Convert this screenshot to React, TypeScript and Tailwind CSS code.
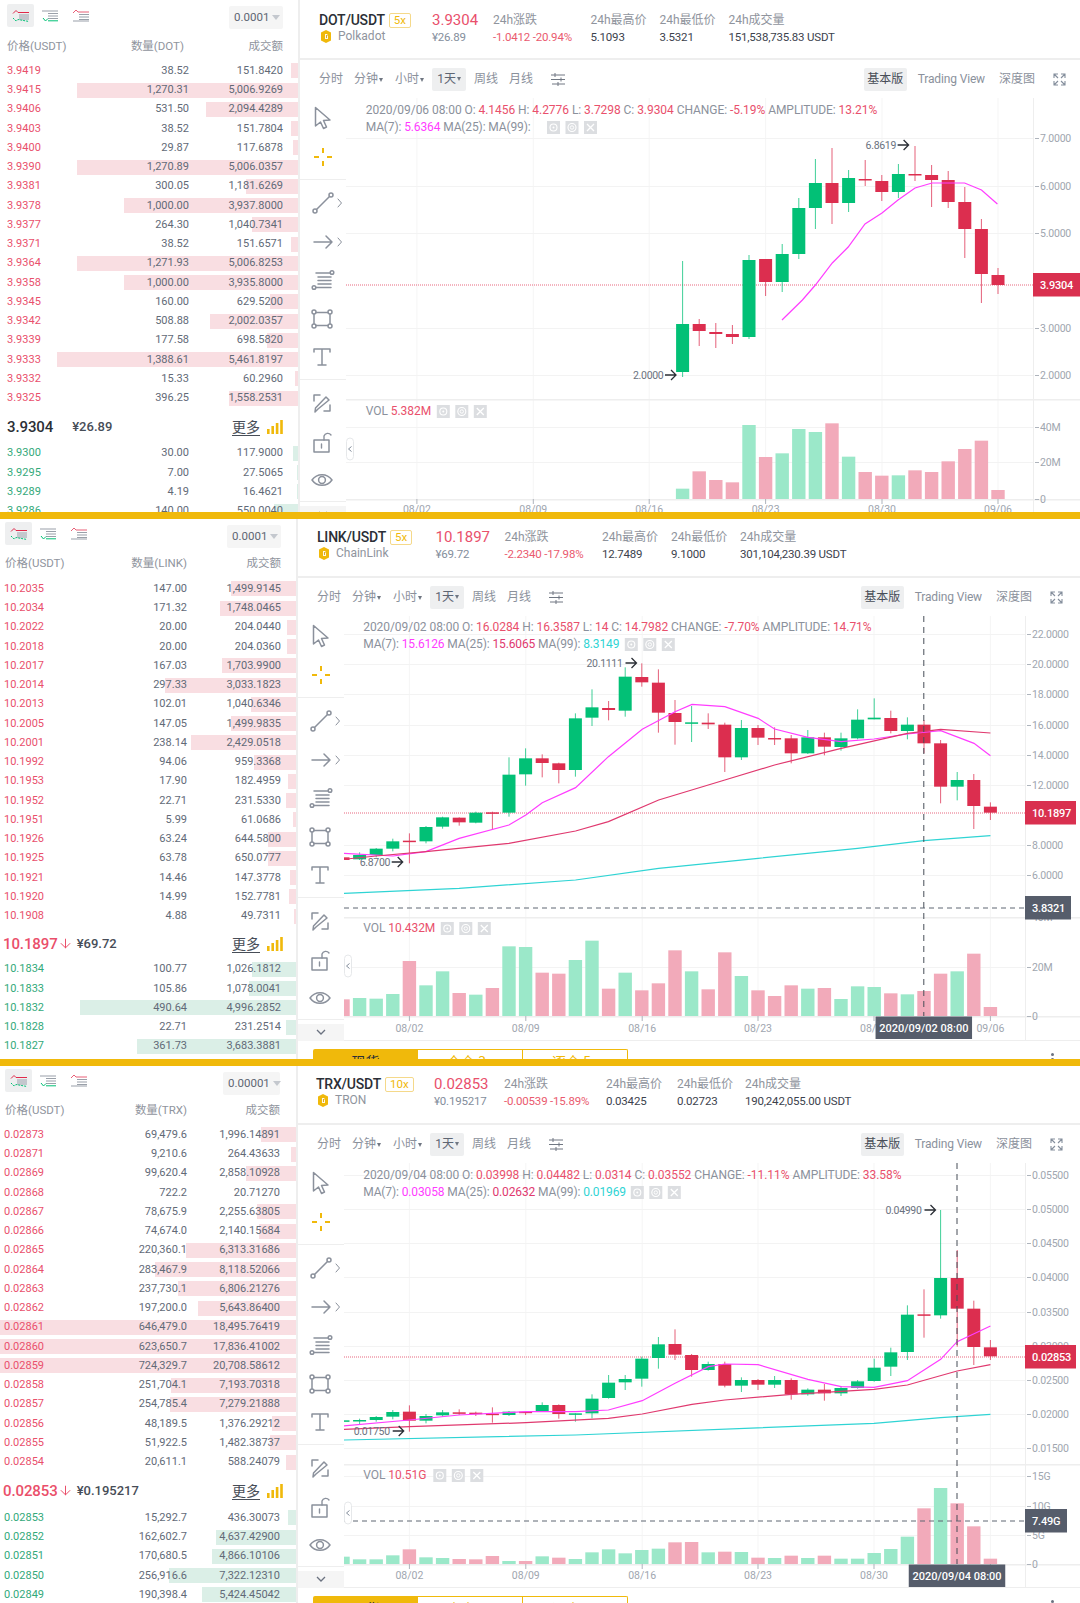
import React from 'react';
import { ArrowDown } from 'lucide-react';

const RED = '#dc2e4f';
const GREEN = '#02c076';
const TXT = '#e9506c';
const K = 2.0103;

type Row = [string, string, string];
type Part = [string, string?];
// [isRed, bodyTop, bodyBottom, wickTop, wickBottom]
type Candle = [number, number, number, number, number];
type Vol = [number, number];

const dotAsks: Row[] = [
  ['3.9419', '38.52', '151.8420'], ['3.9415', '1,270.31', '5,006.9269'], ['3.9406', '531.50', '2,094.4289'],
  ['3.9403', '38.52', '151.7804'], ['3.9400', '29.87', '117.6878'], ['3.9390', '1,270.89', '5,006.0357'],
  ['3.9381', '300.05', '1,181.6269'], ['3.9378', '1,000.00', '3,937.8000'], ['3.9377', '264.30', '1,040.7341'],
  ['3.9371', '38.52', '151.6571'], ['3.9364', '1,271.93', '5,006.8253'], ['3.9358', '1,000.00', '3,935.8000'],
  ['3.9345', '160.00', '629.5200'], ['3.9342', '508.88', '2,002.0357'], ['3.9339', '177.58', '698.5820'],
  ['3.9333', '1,388.61', '5,461.8197'], ['3.9332', '15.33', '60.2960'], ['3.9325', '396.25', '1,558.2531'],
];
const dotBids: Row[] = [
  ['3.9300', '30.00', '117.9000'], ['3.9295', '7.00', '27.5065'], ['3.9289', '4.19', '16.4621'], ['3.9286', '140.00', '550.0040'],
];
const linkAsks: Row[] = [
  ['10.2035', '147.00', '1,499.9145'], ['10.2034', '171.32', '1,748.0465'], ['10.2022', '20.00', '204.0440'],
  ['10.2018', '20.00', '204.0360'], ['10.2017', '167.03', '1,703.9900'], ['10.2014', '297.33', '3,033.1823'],
  ['10.2013', '102.01', '1,040.6346'], ['10.2005', '147.05', '1,499.9835'], ['10.2001', '238.14', '2,429.0518'],
  ['10.1992', '94.06', '959.3368'], ['10.1953', '17.90', '182.4959'], ['10.1952', '22.71', '231.5330'],
  ['10.1951', '5.99', '61.0686'], ['10.1926', '63.24', '644.5800'], ['10.1925', '63.78', '650.0777'],
  ['10.1921', '14.46', '147.3778'], ['10.1920', '14.99', '152.7781'], ['10.1908', '4.88', '49.7311'],
];
const linkBids: Row[] = [
  ['10.1834', '100.77', '1,026.1812'], ['10.1833', '105.86', '1,078.0041'], ['10.1832', '490.64', '4,996.2852'],
  ['10.1828', '22.71', '231.2514'], ['10.1827', '361.73', '3,683.3881'],
];
const trxAsks: Row[] = [
  ['0.02873', '69,479.6', '1,996.14891'], ['0.02871', '9,210.6', '264.43633'], ['0.02869', '99,620.4', '2,858.10928'],
  ['0.02868', '722.2', '20.71270'], ['0.02867', '78,675.9', '2,255.63805'], ['0.02866', '74,674.0', '2,140.15684'],
  ['0.02865', '220,360.1', '6,313.31686'], ['0.02864', '283,467.9', '8,118.52066'], ['0.02863', '237,730.1', '6,806.21276'],
  ['0.02862', '197,200.0', '5,643.86400'], ['0.02861', '646,479.0', '18,495.76419'], ['0.02860', '623,650.7', '17,836.41002'],
  ['0.02859', '724,329.7', '20,708.58612'], ['0.02858', '251,704.1', '7,193.70318'], ['0.02857', '254,785.4', '7,279.21888'],
  ['0.02856', '48,189.5', '1,376.29212'], ['0.02855', '51,922.5', '1,482.38737'], ['0.02854', '20,611.1', '588.24079'],
];
const trxBids: Row[] = [
  ['0.02853', '15,292.7', '436.30073'], ['0.02852', '162,602.7', '4,637.42900'], ['0.02851', '170,680.5', '4,866.10106'],
  ['0.02850', '256,916.6', '7,322.12310'], ['0.02849', '190,398.4', '5,424.45042'],
];

const dotCandles: Candle[] = [
  [1, 275, 285, 268, 294], [1, 229, 274, 219, 303], [1, 202, 229, 187, 258], [1, 180, 202, 171, 208], [1, 175, 180, 165, 207],
  [1, 174, 175.5, 146, 181], [0, 174, 192, 164, 198], [1, 181, 192, 175, 201], [1, 179, 180.5, 160, 186], [0, 178, 203, 170, 212],
  [1, 183, 203, 148, 224], [0, 183, 208, 159, 229], [0, 208, 254, 198, 259], [0, 254, 282, 244, 292], [1, 259, 282, 259, 296],
  [0, 260, 337, 255, 339], [1, 334, 337, 325, 344], [1, 332, 334, 323, 348], [1, 324, 331, 319, 346], [0, 324, 372, 261, 377],
];
const linkCandles: Candle[] = [
  [1, 560, 578, 547, 600], [1, 480, 558, 462, 627], [0, 480, 500, 456, 541], [1, 370, 500, 360, 550], [1, 314, 370, 300, 400],
  [0, 314, 333, 292, 358], [1, 294, 333, 272, 340], [0, 293, 298, 235, 298], [0, 299, 355, 268, 358], [0, 355, 381, 338, 392],
  [1, 352, 380, 338, 406], [0, 352, 400, 330, 402], [1, 355, 400, 345, 430], [1, 354, 356, 322, 375], [1, 324, 353, 315, 375],
  [0, 324, 412, 300, 420], [1, 314, 412, 308, 456], [1, 308, 313, 280, 327], [0, 307, 310, 258, 366], [1, 279, 306, 240, 374],
  [1, 188, 278, 148, 338], [1, 171, 187, 130, 200], [0, 170, 272, 142, 290], [1, 264, 270, 243, 301], [0, 262, 293, 208, 318],
  [0, 295, 450, 280, 470], [1, 430, 450, 428, 490], [1, 415, 429, 403, 472], [0, 415, 463, 385, 497], [0, 464, 578, 412, 590],
  [1, 577, 580, 575, 630], [0, 578, 608, 575, 610], [1, 593, 607, 592, 617], [0, 592, 620, 590, 626], [0, 621, 664, 618, 670],
  [1, 662, 665, 640, 730], [0, 664, 686, 656, 694], [0, 686, 705, 684, 712], [0, 705, 718, 697, 720], [1, 712, 720, 710, 722],
];
const trxCandles: Candle[] = [
  [1, 562, 589, 540, 600], [1, 446, 561, 422, 615], [1, 354, 446, 270, 560], [0, 354, 466, 150, 476], [1, 463, 467, 388, 533],
  [0, 464, 576, 436, 600], [0, 577, 620, 563, 648], [0, 623, 663, 596, 665], [0, 664, 684, 660, 686], [0, 684, 700, 678, 708],
  [1, 689, 700, 672, 722], [0, 689, 703, 685, 707], [1, 660, 703, 655, 719], [0, 660, 674, 648, 684], [1, 660, 674, 657, 690],
  [0, 660, 677, 652, 696], [1, 612, 677, 605, 682], [0, 612, 630, 605, 632], [1, 585, 630, 582, 650], [1, 552, 584, 508, 600],
  [0, 553, 594, 531, 626], [0, 596, 656, 590, 680], [0, 657, 667, 645, 690], [0, 668, 714, 645, 716], [0, 716, 760, 703, 775],
  [0, 760, 764, 760, 785], [1, 735, 762, 733, 776], [0, 735, 753, 727, 756], [1, 755, 758, 753, 765], [0, 755, 765, 753, 768],
  [1, 761, 764, 742, 788], [1, 758, 761, 755, 768], [1, 757, 759, 748, 765], [0, 757, 766, 750, 770], [0, 768, 782, 762, 790],
  [1, 755, 782, 736, 815], [0, 756, 770, 750, 778], [0, 771, 780, 768, 785], [0, 780, 783, 776, 795], [0, 781, 783, 781, 783],
];

const dotVol: Vol[] = [[0, 266], [1, 214], [1, 240], [1, 247], [0, 75], [1, 171], [0, 160], [0, 87], [0, 96], [1, 70], [0, 170], [1, 216], [1, 227], [0, 226], [1, 211], [1, 216], [1, 184], [1, 147], [1, 122], [1, 270]];
const linkVol: Vol[] = [[1, 298], [0, 294], [0, 296], [0, 282], [1, 183], [0, 256], [0, 214], [1, 279], [0, 284], [1, 264], [0, 139], [0, 141], [1, 218], [1, 221], [0, 180], [0, 122], [1, 266], [0, 218], [1, 271], [1, 250], [1, 151], [0, 214], [1, 268], [1, 157], [0, 228], [1, 271], [1, 288], [1, 256], [0, 266], [1, 264], [0, 297], [0, 259], [0, 261], [1, 280], [0, 283], [1, 273], [1, 221], [0, 214], [1, 161], [1, 321]];
const trxVol: Vol[] = [[0, 380], [0, 388], [0, 388], [0, 376], [1, 358], [0, 382], [0, 384], [1, 387], [1, 388], [1, 378], [0, 393], [1, 393], [0, 379], [1, 383], [0, 387], [0, 367], [0, 358], [0, 370], [0, 360], [0, 356], [1, 337], [1, 336], [0, 367], [1, 365], [0, 366], [1, 383], [0, 384], [1, 377], [0, 384], [1, 377], [0, 386], [0, 386], [0, 369], [0, 357], [0, 320], [1, 235], [0, 174], [1, 220], [1, 289], [1, 386]];

type Panel = {
  key: string;
  base: string; quote: string; name: string; lev: string; price: string; cny: string; change: string;
  high: string; low: string; vol: string; step: string; asks: Row[]; bids: Row[]; barScale: number;
  arrow: boolean; tabs: boolean;
  cls: {
    panel: string; book: string; top: string; left: string; rowsPad: string; rowPad: string; totalW: string; qtyW: string;
    mid: string; grid: string; head: string; headPad: string; toolPad: string; chartH: string;
    sel: string; btn: string;
  };
  x0: number; y0: number; w: number; h: number;
  axis: number; badgeW: number; crossW: number;
  cLast: number; cy: (v: number) => number; candles: Candle[];
  ma7: number[][]; ma25: number[][]; ma99: number[][];
  vy: (v: number) => number; vols: Vol[]; vBase: number; vTop: number;
  prices: [string, number][]; volLabels: [string, number][]; lastPrice: [string, number];
  ticks: number[]; xLabelY: number; legendX: number; l1Y: number; l2Y: number; volLegendY: number;
  l1: Part[]; l2: Part[]; volText: string; iconsX: number; volIconsX: number;
  hi: [string, number, number]; lo: [string, number, number];
  handleY: number; cross?: { x: number; y: number; yLabel: string; time: string; };
  bottom: number;
};

const G = '#8b919c';
const M = '#ff3dff';
const P = '#e0396f';
const C = '#2fd4d4';

const zx = (v: number) => 300 + v / K;

const panels: Panel[] = [
  {
    key: 'dot', base: 'DOT', quote: 'USDT', name: 'Polkadot', lev: '5x', price: '3.9304', cny: '¥26.89', change: '-1.0412 -20.94%',
    high: '5.1093', low: '3.5321', vol: '151,538,735.83 USDT', step: '0.0001', asks: dotAsks, bids: dotBids, barScale: 0.0441, arrow: false, tabs: false,
    cls: {
      panel: 'h-[512px]', book: 'w-[298px]', top: 'h-[37px] pl-[7px] pr-[15px]', left: 'pl-[7px] pr-[15px]', rowsPad: 'pt-[4.4px]',
      rowPad: 'pl-[7px] pr-[15px]', totalW: 'w-[94px]', qtyW: 'w-[95px]', mid: 'h-[36px] pt-[2px] pl-[7px] pr-[14px]',
      grid: 'grid-cols-[113px_61px_97.5px_69px_69px_1fr]', head: 'h-[60px]', headPad: 'pl-[19px] pt-[11px]', toolPad: 'pl-[19px] pr-[14px]', chartH: 'h-[414px]',
      sel: 'w-[54px] h-[23px] mt-[6px] pl-[5px]', btn: 'mt-[4px]',
    },
    x0: 346, y0: 98, w: 734, h: 414, axis: 1033, badgeW: 47, crossW: 46,
    cLast: 998, cy: (v) => v, candles: dotCandles,
    ma7: [[782, 320], [802.4, 300], [815.4, 285], [832.3, 263], [848.2, 247], [865, 224], [882, 213], [898, 200], [915, 188], [932, 183], [964.6, 183], [981.5, 190], [997.4, 204]],
    ma25: [], ma99: [],
    vy: (v) => 400 + v / 3, vols: dotVol, vBase: 499, vTop: 399,
    prices: [['7.0000', 138], ['6.0000', 186], ['5.0000', 233], ['3.0000', 328], ['2.0000', 375]],
    volLabels: [['40M', 427], ['20M', 462], ['0', 499]],
    lastPrice: ['3.9304', 285],
    ticks: [416.9, 533.3, 649.2, 765.6, 882, 998], xLabelY: 509, legendX: 365.7, l1Y: 110, l2Y: 127,
    volLegendY: 411,
    l1: [['2020/09/06 08:00 O: '], ['4.1456', TXT], [' H: '], ['4.2776', TXT], [' L: '], ['3.7298', TXT], [' C: '], ['3.9304', TXT], [' CHANGE: '], ['-5.19%', TXT], [' AMPLITUDE: '], ['13.21%', TXT]],
    l2: [['MA(7): '], ['5.6364', M], [' MA(25): '], [' MA(99): ']],
    volText: '5.382M', iconsX: 547, volIconsX: 436.8,
    hi: ['6.8619', 865.6, 145], lo: ['2.0000', 633, 375],
    handleY: 438, bottom: 512,
  },
  {
    key: 'link', base: 'LINK', quote: 'USDT', name: 'ChainLink', lev: '5x', price: '10.1897', cny: '¥69.72', change: '-2.2340 -17.98%',
    high: '12.7489', low: '9.1000', vol: '301,104,230.39 USDT', step: '0.0001', asks: linkAsks, bids: linkBids, barScale: 0.0433, arrow: true, tabs: true,
    cls: {
      panel: 'h-[540px]', book: 'w-[296px]', top: 'h-[35px] pl-[5px] pr-[15px]', left: 'pl-[5px] pr-[15px]', rowsPad: 'pt-[5.4px]',
      rowPad: 'pl-[4px] pr-[15px]', totalW: 'w-[94px]', qtyW: 'w-[95px]', mid: 'h-[34px] pt-[2px] pl-[3px] pr-[12px]',
      grid: 'grid-cols-[118.5px_69px_97.4px_69.2px_69px_1fr]', head: 'h-[59px]', headPad: 'pl-[19px] pt-[9px]', toolPad: 'pl-[19px] pr-[17px]', chartH: 'h-[425px]',
      sel: 'w-[54px] h-[23px] mt-[6px] pl-[5px]', btn: 'mt-[3px]',
    },
    x0: 344, y0: 616, w: 736, h: 425, axis: 1025, badgeW: 51, crossW: 46,
    cLast: 990.4, cy: (v) => 620 + v / 3, candles: linkCandles,
    ma7: [[87, 700], [187, 708], [253, 695], [320, 655], [420, 615], [454, 585], [487, 548], [554, 503], [620, 410], [688, 328], [754, 275], [788, 253], [854, 260], [921, 295], [954, 327], [1021, 352], [1088, 365], [1154, 357], [1221, 342], [1288, 332], [1355, 370], [1388, 407]].map(([a, b]) => [zx(a), 620 + b / 3]),
    ma25: [[87, 718], [153, 708], [253, 695], [420, 670], [554, 633], [620, 605], [721, 540], [854, 480], [954, 435], [1088, 385], [1221, 340], [1288, 328], [1388, 339]].map(([a, b]) => [zx(a), 620 + b / 3]),
    ma99: [[87, 820], [320, 805], [554, 780], [721, 745], [921, 715], [1121, 685], [1254, 662], [1388, 647]].map(([a, b]) => [zx(a), 620 + b / 3]),
    vy: (v) => 900 + v / 3, vols: linkVol, vBase: 1016, vTop: 917,
    prices: [['22.0000', 634], ['20.0000', 664], ['18.0000', 694], ['16.0000', 725], ['14.0000', 755], ['12.0000', 785], ['8.0000', 845], ['6.0000', 875]],
    volLabels: [['40M', 917], ['20M', 967], ['0', 1016]],
    lastPrice: ['10.1897', 813],
    ticks: [409.4, 525.8, 642.2, 758, 874, 990.4], xLabelY: 1028, legendX: 363.2, l1Y: 627, l2Y: 644,
    volLegendY: 928,
    l1: [['2020/09/02 08:00 O: '], ['16.0284', TXT], [' H: '], ['16.3587', TXT], [' L: '], ['14', TXT], [' C: '], ['14.7982', TXT], [' CHANGE: '], ['-7.70%', TXT], [' AMPLITUDE: '], ['14.71%', TXT]],
    l2: [['MA(7): '], ['15.6126', M], [' MA(25): '], ['15.6065', P], [' MA(99): '], ['8.3149', C]],
    volText: '10.432M', iconsX: 624.8, volIconsX: 440.8,
    hi: ['20.1111', 586.5, 663], lo: ['6.8700', 359.7, 862],
    handleY: 955, bottom: 1040,
    cross: { x: 923.8, y: 908, yLabel: '3.8321', time: '2020/09/02 08:00' },
  },
  {
    key: 'trx', base: 'TRX', quote: 'USDT', name: 'TRON', lev: '10x', price: '0.02853', cny: '¥0.195217', change: '-0.00539 -15.89%',
    high: '0.03425', low: '0.02723', vol: '190,242,055.00 USDT', step: '0.00001', asks: trxAsks, bids: trxBids, barScale: 0.01735, arrow: true, tabs: true,
    cls: {
      panel: 'h-[537px]', book: 'w-[296px]', top: 'h-[35px] pl-[5px] pr-[16px]', left: 'pl-[5px] pr-[16px]', rowsPad: 'pt-[4.4px]',
      rowPad: 'pl-[4px] pr-[16px]', totalW: 'w-[93px]', qtyW: 'w-[95px]', mid: 'h-[36.5px] pt-[1.7px] pl-[3px] pr-[12px]',
      grid: 'grid-cols-[118px_70px_102px_71px_68px_1fr]', head: 'h-[59px]', headPad: 'pl-[18px] pt-[9px]', toolPad: 'pl-[19px] pr-[17px]', chartH: 'h-[425px]',
      sel: 'w-[57px] h-[23px] mt-[6px] pl-[5px]', btn: 'mt-[3px]',
    },
    x0: 344, y0: 1163, w: 736, h: 425, axis: 1025, badgeW: 51, crossW: 42,
    cLast: 990.4, cy: (v) => 1160 + v / 3, candles: trxCandles,
    ma7: [[87, 798], [220, 780], [320, 765], [454, 755], [554, 755], [620, 750], [688, 722], [754, 670], [821, 620], [854, 612], [921, 614], [1021, 658], [1088, 680], [1154, 682], [1221, 662], [1288, 598], [1321, 545], [1388, 498]].map(([a, b]) => [zx(a), 1160 + b / 3]),
    ma25: [[87, 808], [220, 800], [454, 788], [620, 775], [688, 762], [788, 733], [854, 720], [988, 703], [1154, 688], [1221, 675], [1321, 633], [1388, 614]].map(([a, b]) => [zx(a), 1160 + b / 3]),
    ma99: [[87, 840], [554, 825], [1154, 790], [1288, 773], [1388, 763]].map(([a, b]) => [zx(a), 1160 + b / 3]),
    vy: (v) => 1430 + v / 3, vols: trxVol, vBase: 1564, vTop: 1464,
    prices: [['0.05500', 1175], ['0.05000', 1209], ['0.04500', 1243], ['0.04000', 1277], ['0.03500', 1312], ['0.03000', 1346], ['0.02500', 1380], ['0.02000', 1414], ['0.01500', 1448]],
    volLabels: [['15G', 1476], ['10G', 1506], ['5G', 1535], ['0', 1564]],
    lastPrice: ['0.02853', 1357],
    ticks: [409.4, 525.8, 642.2, 758, 874, 990.4], xLabelY: 1575, legendX: 363.2, l1Y: 1175, l2Y: 1192,
    volLegendY: 1475,
    l1: [['2020/09/04 08:00 O: '], ['0.03998', TXT], [' H: '], ['0.04482', TXT], [' L: '], ['0.0314', TXT], [' C: '], ['0.03552', TXT], [' CHANGE: '], ['-11.11%', TXT], [' AMPLITUDE: '], ['33.58%', TXT]],
    l2: [['MA(7): '], ['0.03058', M], [' MA(25): '], ['0.02632', P], [' MA(99): '], ['0.01969', C]],
    volText: '10.51G', iconsX: 630.8, volIconsX: 433.3,
    hi: ['0.04990', 885.5, 1210], lo: ['0.01750', 353.7, 1431],
    handleY: 1502, bottom: 1587,
    cross: { x: 957, y: 1521, yLabel: '7.49G', time: '2020/09/04 08:00' },
  },
];

function DepthIcon({ mode }: { mode: number }) {
  return (
    <svg width="18" height="14" viewBox="0 0 18 14" fill="none">
      {mode === 0 && <path d="M1 4.5 L4 1.5 L6 3.5 L17 3.5" stroke="#e0294a" strokeWidth="1" />}
      {mode === 2 && <path d="M1 4 L4 1 L6 3 L17 3" stroke="#e0294a" strokeWidth="1" opacity="0.75" />}
      {mode === 0 && (
        <>
          <path d="M7 6 H17 M7 8 H17 M7 10 H17" stroke="#9aa0a9" strokeWidth="1.1" />
          <path d="M1 9 L4 12 L6 10.5 L17 12.5" stroke="#02c076" strokeWidth="1" strokeDasharray="2 1" />
        </>
      )}
      {mode === 1 && (
        <>
          <path d="M1 2 H17 M7 4.5 H17 M7 7 H17 M7 9.5 H17" stroke="#9aa0a9" strokeWidth="1.1" />
          <path d="M2 9 L4.5 12 L7 9.5 M7 11.8 H17" stroke="#02c076" strokeWidth="1" />
        </>
      )}
      {mode === 2 && (
        <path d="M7 5.5 H17 M7 8 H17 M7 10.5 H17 M1 12 H17" stroke="#9aa0a9" strokeWidth="1.1" />
      )}
    </svg>
  );
}

function OrderRow({ r, color, barColor, scale, p }: { r: Row; color: string; barColor: string; scale: number; p: Panel }) {
  const amount = parseFloat(r[2].replace(/,/g, ''));
  return (
    <div className={`relative h-[19.25px] flex items-center text-[11px] ${p.cls.rowPad}`}>
      <div className={`absolute right-0 top-[2px] h-[15px] ${barColor}`} style={{ width: Math.min(amount * scale, 296) }} />
      <span className={`relative flex-1 ${color}`}>{r[0]}</span>
      <span className={`relative text-right text-[#626a77] ${p.cls.qtyW}`}>{r[1]}</span>
      <span className={`relative text-right text-[#626a77] ${p.cls.totalW}`}>{r[2]}</span>
    </div>
  );
}

function OrderBook({ p }: { p: Panel }) {
  return (
    <div className={`shrink-0 overflow-hidden ${p.cls.book}`}>
      <div className={`flex items-start ${p.cls.top}`}>
        <div className={`flex items-center ${p.cls.btn}`}>
          <div className="w-[27px] h-[23px] rounded-[2px] bg-[#eeeff0] flex items-center justify-center"><DepthIcon mode={0} /></div>
          <div className="w-[18px] ml-[7px] flex items-center"><DepthIcon mode={1} /></div>
          <div className="w-[18px] ml-[13px] flex items-center"><DepthIcon mode={2} /></div>
        </div>
        <div className={`ml-auto rounded-[2px] bg-[#f5f5f5] flex items-center text-[11.5px] text-[#5e6673] ${p.cls.sel}`}>
          {p.step}
          <span className="ml-[3px] w-0 h-0 border-x-[4px] border-x-transparent border-t-[5px] border-t-[#c4c8ce]" />
        </div>
      </div>
      <div className={`h-[20px] flex items-center text-[11.5px] text-[#8f949d] ${p.cls.left}`}>
        <span className="flex-1">价格({p.quote})</span>
        <span className={`text-right ${p.key === 'dot' ? 'w-[100px] pr-[5px]' : 'w-[95px]'}`}>数量({p.base})</span>
        <span className={`text-right ${p.cls.totalW}`}>成交额</span>
      </div>
      <div className={p.cls.rowsPad}>
        {p.asks.map((r) => <OrderRow key={r[0]} r={r} p={p} color="text-[#e9506c]" barColor="bg-[#f9dee2]" scale={p.barScale} />)}
      </div>
      <div className={`flex items-center ${p.cls.mid}`}>
        <span className={`text-[15px] font-medium tracking-[-0.1px] ${p.arrow ? 'text-[#ea4f6a]' : 'text-[#2b2f36]'}`}>{p.price}</span>
        {p.arrow
          ? <ArrowDown size={15} strokeWidth={1.6} className="text-[#ea4f6a] mr-[4px]" />
          : <span className="w-[19px]" />}
        <span className="text-[13px] font-medium text-[#474d57]">{p.cny}</span>
        <span className="ml-auto text-[14px] text-[#474d57] underline underline-offset-[3px] [font-family:'Noto_Sans_CJK_SC',sans-serif]">更多</span>
        <svg width="17" height="14" viewBox="0 0 17 14" className="ml-[7px]" fill="#f0b90b">
          <rect x="0" y="9" width="2.6" height="5" /><rect x="4.4" y="6" width="2.6" height="8" /><rect x="8.8" y="3" width="2.6" height="11" /><rect x="13.2" y="0" width="2.6" height="14" />
        </svg>
      </div>
      <div>
        {p.bids.map((r) => <OrderRow key={r[0]} r={r} p={p} color="text-[#33a97a]" barColor="bg-[#dbefe7]" scale={p.barScale} />)}
      </div>
    </div>
  );
}

function Coin() {
  return (
    <svg width="10" height="13" viewBox="0 0 10 13" fill="none">
      <path d="M5 0 L10 2.5 V10.5 L5 13 L0 10.5 V2.5 Z" fill="#f0b90b" />
      <path d="M4 4 H6.4 V6 H7 V9 H4 Z" fill="#fff" opacity="0.9" />
      <path d="M5 5 H5.8 V8 H5 Z" fill="#c99400" />
    </svg>
  );
}

function Header({ p }: { p: Panel }) {
  return (
    <div className={`shrink-0 border-b-2 border-[#eeeeee] grid text-[12px] leading-[18px] ${p.cls.grid} ${p.cls.head} ${p.cls.headPad}`}>
      <div>
        <div className="flex items-center h-[18px]">
          <span className="text-[14px] font-medium text-[#2b2f36] tracking-[-0.2px]">{p.base}/{p.quote}</span>
          <span className="ml-[4px] h-[15px] px-[4px] flex items-center border border-[#f5d98a] rounded-[2px] text-[11.5px] text-[#f0b90b]">{p.lev}</span>
        </div>
        <div className="flex items-center mt-[-2px] h-[18px]">
          <span className="ml-[2px]"><Coin /></span>
          <span className="ml-[7px] text-[#8f949d] text-[12px]">{p.name}</span>
        </div>
      </div>
      <div>
        <div className="text-[15px] text-[#e9506c] h-[18px] flex items-center">{p.price}</div>
        <div className="mt-[-1px] h-[18px] text-[11.5px] text-[#848e9c] tracking-[-0.2px]">{p.cny}</div>
      </div>
      <Stat label="24h涨跌" value={p.change} red />
      <Stat label="24h最高价" value={p.high} />
      <Stat label="24h最低价" value={p.low} />
      <Stat label="24h成交量" value={p.vol} />
    </div>
  );
}

function Stat({ label, value, red }: { label: string; value: string; red?: boolean }) {
  return (
    <div>
      <div className="h-[18px] text-[#8f949d] whitespace-nowrap">{label}</div>
      <div className={`mt-[-1px] h-[18px] text-[11.5px] tracking-[-0.2px] whitespace-nowrap ${red ? 'text-[#ea5a6e]' : 'text-[#3c424d]'}`}>{value}</div>
    </div>
  );
}

function Caret() {
  return <span className="inline-block ml-[1px] align-middle w-0 h-0 border-x-[2.5px] border-x-transparent border-t-[4px] border-t-[#707782]" />;
}

function Toolbar({ p }: { p: Panel }) {
  return (
    <div className={`shrink-0 h-[38px] flex items-center text-[12px] text-[#8b919c] ${p.cls.toolPad}`}>
      <span>分时</span>
      <span className="ml-[11px]">分钟<Caret /></span>
      <span className="ml-[12px]">小时<Caret /></span>
      <span className="ml-[8px] w-[34px] h-[23px] bg-[#eeeff0] rounded-[2px] flex items-center justify-center text-[#5e6673]">1天<Caret /></span>
      <span className="ml-[8px]">周线</span>
      <span className="ml-[11px]">月线</span>
      <svg className="ml-[18px]" width="14" height="14" viewBox="0 0 14 14" fill="none" stroke="#707782" strokeWidth="1">
        <path d="M0 3 H14 M0 7.5 H14 M1 12 H14 M4 1 V5 M10 5.5 V9.5 M7 10 V14" />
      </svg>
      <span className="ml-auto w-[43px] h-[23px] bg-[#eeeff0] rounded-[2px] flex items-center justify-center text-[#474d57]">基本版</span>
      <span className="ml-[11px] tracking-[-0.15px]">Trading View</span>
      <span className="ml-[14px]">深度图</span>
      <svg className="ml-[18px]" width="13" height="13" viewBox="0 0 13 13" fill="none" stroke="#848e9c" strokeWidth="1.1">
        <path d="M1 5 V1 H5 M1 1 L5 5 M12 5 V1 H8 M12 1 L8 5 M1 8 V12 H5 M1 12 L5 8 M12 8 V12 H8 M12 12 L8 8" />
      </svg>
    </div>
  );
}

function Tool({ children }: { children: React.ReactNode }) {
  return (
    <div className="h-[38.5px] shrink-0 flex items-center">
      <svg width="46" height="38" viewBox="0 0 46 38" fill="none" stroke="#8b919c" strokeWidth="1.5" strokeLinecap="round" strokeLinejoin="round">
        {children}
      </svg>
    </div>
  );
}

const Chev = () => <path d="M38 15 L41.5 19 L38 23" strokeWidth="1" />;

function Tools() {
  return (
    <div className="shrink-0 w-[46px] flex flex-col overflow-hidden">
      <div className="shrink-0 pt-[1px] pb-[3px] border-b border-[#eeeeee]">
        <Tool><path d="M15.5 8.5 L15.5 27 L20.5 23 L23.5 29.5 L26.5 28 L23.5 21.5 L30 21 Z" /></Tool>
        <Tool>
          <path d="M23 10 V15 M23 23 V28 M14 19 H19 M27 19 H32" stroke="#f0b90b" strokeWidth="2" strokeLinecap="butt" />
        </Tool>
      </div>
      <div className="shrink-0 pt-[4px] pb-[2.5px] border-b border-[#eeeeee]">
        <Tool>
          <circle cx="15" cy="27" r="2" /><circle cx="31" cy="11" r="2" /><path d="M16.5 25.5 L29.5 12.5" /><Chev />
        </Tool>
        <Tool>
          <path d="M14 19 H32 M26 13 L32 19 L26 25" /><Chev />
        </Tool>
        <Tool>
          <path d="M16 12 H30 M18 16 H31 M18 19.5 H31 M18 23 H31 M16 26.5 H31" /><circle cx="32" cy="11.5" r="1.8" /><circle cx="14" cy="26.5" r="1.8" />
        </Tool>
        <Tool>
          <path d="M16 12.5 H28 M16 25.5 H28 M14 14.5 V23.5 M30 14.5 V23.5" /><circle cx="14" cy="12" r="2" /><circle cx="30" cy="12" r="2" /><circle cx="14" cy="26" r="2" /><circle cx="30" cy="26" r="2" />
        </Tool>
        <Tool>
          <path d="M14 14 V11 H30 V14 M22 11 V27 M18 27 H26" />
        </Tool>
      </div>
      <div className="shrink-0 pt-[4px] pb-[1px] border-b border-[#eeeeee]">
        <Tool>
          <path d="M20 11 H14 V17 M24 27 H30 V21" /><path d="M18 25 L15 28 L15.5 24 L26 13 L29 16 Z" />
        </Tool>
        <Tool>
          <rect x="14" y="17" width="15" height="12" /><path d="M21.5 21 V25 M24 17 V13 A4 4 0 0 1 31 12" strokeWidth="1.4" />
        </Tool>
        <Tool>
          <path d="M12 19 C17 12 27 12 32 19 C27 26 17 26 12 19 Z" /><circle cx="22" cy="19" r="3.4" />
        </Tool>
      </div>
      <div className="shrink-0 mt-[4px] h-[17px] bg-[#f5f5f5] flex items-center justify-center">
        <svg width="10" height="6" viewBox="0 0 10 6" fill="none" stroke="#6b7280" strokeWidth="1.3"><path d="M1 1 L5 5 L9 1" /></svg>
      </div>
    </div>
  );
}

function LegendIcons({ x, y }: { x: number; y: number }) {
  const c = '#fff';
  return (
    <g>
      <rect x={x} y={y} width="13" height="13" fill="#dcdee1" />
      <circle cx={x + 6.5} cy={y + 6.5} r="3.5" fill="none" stroke={c} strokeWidth="1.1" /><circle cx={x + 6.5} cy={y + 6.5} r="1" fill={c} />
      <rect x={x + 18.5} y={y} width="13" height="13" fill="#dcdee1" />
      <circle cx={x + 25} cy={y + 6.5} r="4" fill="none" stroke={c} strokeWidth="1.1" /><circle cx={x + 25} cy={y + 6.5} r="1.7" fill="none" stroke={c} strokeWidth="1" />
      <rect x={x + 37} y={y} width="13" height="13" fill="#dcdee1" />
      <path d={`M${x + 40} ${y + 3} L${x + 47} ${y + 10} M${x + 47} ${y + 3} L${x + 40} ${y + 10}`} stroke={c} strokeWidth="1.3" />
    </g>
  );
}

function Marker({ label, x, y }: { label: string; x: number; y: number }) {
  const w = label.length > 6 ? 39 : 32;
  return (
    <g>
      <text x={x} y={y + 4} fontSize="10.5" fill="#6b7280" letterSpacing="-0.3">{label}</text>
      <path d={`M${x + w} ${y} H${x + w + 11} M${x + w + 6} ${y - 5} L${x + w + 11} ${y} L${x + w + 6} ${y + 5}`} fill="none" stroke="#2b2f36" strokeWidth="1.3" />
    </g>
  );
}

const pts = (list: number[][]) => list.map(([a, b]) => `${a},${b}`).join(' ');

function Chart({ p }: { p: Panel }) {
  const labels = ['08/02', '08/09', '08/16', '08/23', '08/30', '09/06'];
  const fs = 12;
  const n = p.vols.length;
  return (
    <svg width={p.w} height={p.h} viewBox={`${p.x0} ${p.y0} ${p.w} ${p.h}`} className="shrink-0 block">
      {/* grid */}
      {p.ticks.map((t) => <rect key={t} x={t - 0.5} y={p.y0} width="1" height={p.vBase - p.y0} fill="#f5f5f5" />)}
      {p.prices.map(([l, y]) => <rect key={l} x={p.x0} y={y} width={p.axis - p.x0} height="1" fill="#f3f3f3" />)}
      {p.volLabels.slice(0, -1).map(([l, y]) => <rect key={l} x={p.x0} y={y} width={p.axis - p.x0} height="1" fill="#f3f3f3" />)}
      <rect x={p.x0} y={p.vTop} width={p.w} height="1.5" fill="#eeeeee" />
      <rect x={p.x0} y={p.vBase} width={p.w} height="1.5" fill="#eeeeee" />
      <rect x={p.axis} y={p.y0} width="1" height={p.bottom - p.y0} fill="#eeeeee" />
      {p.bottom < 1000 ? null : <rect x={p.x0} y={p.bottom} width={p.w} height="1" fill="#eeeeee" />}

      {/* price line */}
      <line x1={p.x0} x2={p.axis} y1={p.lastPrice[1]} y2={p.lastPrice[1]} stroke="#e0294a" strokeWidth="1" strokeDasharray="1 1" opacity="0.7" />

      {/* volumes */}
      {p.vols.map(([r, t], i) => {
        const x = p.cLast - 16.6 * (n - 1 - i);
        const y = p.vy(t);
        return <rect key={i} x={x - 6.7} y={y} width="13.4" height={p.vBase - y} fill={r ? '#f2aaba' : '#9be8c9'} />;
      })}

      {/* candles */}
      {p.candles.map(([r, a, b, c, d], i) => {
        const x = p.cLast - 16.6 * i;
        const col = r ? RED : GREEN;
        return (
          <g key={i}>
            <rect x={x - 0.5} y={p.cy(c)} width="1" height={p.cy(d) - p.cy(c)} fill={col} opacity="0.75" />
            <rect x={x - 6.5} y={p.cy(a)} width="13" height={Math.max(p.cy(b) - p.cy(a), 1.5)} fill={col} />
          </g>
        );
      })}

      {/* moving averages */}
      <polyline points={pts(p.ma7)} fill="none" stroke={M} strokeWidth="1.2" />
      {p.ma25.length > 0 && <polyline points={pts(p.ma25)} fill="none" stroke={P} strokeWidth="1.2" />}
      {p.ma99.length > 0 && <polyline points={pts(p.ma99)} fill="none" stroke={C} strokeWidth="1.2" />}

      <Marker label={p.hi[0]} x={p.hi[1]} y={p.hi[2]} />
      <Marker label={p.lo[0]} x={p.lo[1]} y={p.lo[2]} />

      {/* legends */}
      <text x={p.legendX} y={p.l1Y + 4} fontSize={fs} fill={G} letterSpacing="-0.05">
        {p.l1.map(([t, c], i) => <tspan key={i} fill={c || G}>{t}</tspan>)}
      </text>
      <text x={p.legendX} y={p.l2Y + 4} fontSize={fs} fill={G} letterSpacing="-0.12">
        {p.l2.map(([t, c], i) => <tspan key={i} fill={c || G}>{t}</tspan>)}
      </text>
      <LegendIcons x={p.iconsX} y={p.l2Y - 6} />
      <text x={p.legendX} y={p.volLegendY + 4} fontSize={fs} fill={G} letterSpacing="-0.05">
        VOL <tspan fill={TXT}>{p.volText}</tspan>
      </text>
      <LegendIcons x={p.volIconsX} y={p.volLegendY - 6} />

      {/* right axis */}
      {[...p.prices, ...p.volLabels].map(([l, y]) => (
        <g key={l}>
          <rect x={p.axis + 2} y={y} width="4" height="1" fill="#aeb4bc" />
          <text x={p.axis + 7} y={y + 4} fontSize="10.5" fill="#a0a6af" letterSpacing="-0.2">{l}</text>
        </g>
      ))}
      {p.ticks.map((t, i) => (
        <g key={t}>
          <rect x={t - 0.5} y={p.vBase} width="1" height="5" fill="#aeb4bc" />
          <text x={t} y={p.xLabelY + 4} fontSize="10.5" fill="#a0a6af" textAnchor="middle">{labels[i]}</text>
        </g>
      ))}

      {/* crosshair */}
      {p.cross && (
        <g>
          <line x1={p.cross.x} x2={p.cross.x} y1={p.y0} y2={p.vBase} stroke="#474d57" strokeWidth="1" strokeDasharray="6 5" />
          <line x1={p.x0} x2={p.axis} y1={p.cross.y} y2={p.cross.y} stroke="#5e6673" strokeWidth="1" strokeDasharray="5 4" />
          <rect x={p.cross.x - 48.25} y={p.vBase + 0.5} width="96.5" height="22.5" fill="#565d6b" />
          <text x={p.cross.x} y={p.vBase + 16} fontSize="11" fontWeight="500" fill="#fff" textAnchor="middle">{p.cross.time}</text>
        </g>
      )}

      {/* last price badge */}
      <rect x={p.axis} y={p.lastPrice[1] - 12} width={p.badgeW} height="23.5" fill="#d9304f" />
      <text x={p.axis + 7} y={p.lastPrice[1] + 4} fontSize="11" fontWeight="500" fill="#fff" letterSpacing="-0.2">{p.lastPrice[0]}</text>
      {p.cross && (
        <g>
          <rect x={p.axis} y={p.cross.y - 12} width={p.crossW} height="23.5" fill="#565d6b" />
          <text x={p.axis + 7} y={p.cross.y + 4} fontSize="11" fontWeight="500" fill="#fff" letterSpacing="-0.2">{p.cross.yLabel}</text>
        </g>
      )}

      {/* collapse handle */}
      <rect x={p.x0 + 0.5} y={p.handleY} width="7" height="22" rx="3.5" fill="#fff" stroke="#e6e8ea" />
      <path d={`M${p.x0 + 5.5} ${p.handleY + 8.5} L${p.x0 + 2.5} ${p.handleY + 11} L${p.x0 + 5.5} ${p.handleY + 13.5}`} fill="none" stroke="#848e9c" strokeWidth="1" />
    </svg>
  );
}

function Tabs() {
  const tab = 'w-[105px] h-[24px] flex items-center justify-center text-[14px]';
  return (
    <div className="flex items-start pl-[15px] mt-[8px] [font-family:'Noto_Sans_CJK_SC',sans-serif]">
      <div className={`${tab} bg-[#f0b90b] text-[#2b2f36] rounded-tl-[2px]`}>现货</div>
      <div className={`${tab} border-t border-r border-[#f0b90b] text-[#f0b90b]`}>全仓 3x</div>
      <div className={`${tab} border-t border-r border-[#f0b90b] text-[#f0b90b] rounded-tr-[2px]`}>逐仓 5x</div>
      <div className="ml-auto mr-[26px] mt-[4px] flex flex-col gap-[2px]">
        <span className="w-[3px] h-[3px] rounded-full bg-[#6b7280]" />
        <span className="w-[3px] h-[3px] rounded-full bg-[#6b7280]" />
      </div>
    </div>
  );
}

function Market({ p }: { p: Panel }) {
  return (
    <div className={`flex overflow-hidden bg-white ${p.cls.panel}`}>
      <OrderBook p={p} />
      <div className="shrink-0 w-[2px] bg-[#eeeeee]" />
      <div className="flex-1 min-w-0 flex flex-col">
        <Header p={p} />
        <Toolbar p={p} />
        <div className={`shrink-0 flex ${p.cls.chartH}`}>
          <Tools />
          <Chart p={p} />
        </div>
        {p.tabs && <Tabs />}
      </div>
    </div>
  );
}

export default function App() {
  return (
    <div className="w-[1080px] h-[1603px] overflow-hidden bg-white [font-family:Roboto,'Noto_Sans_CJK_SC',sans-serif]">
      <Market p={panels[0]} />
      <div className="h-[7px] bg-[#f0b90b]" />
      <Market p={panels[1]} />
      <div className="h-[7px] bg-[#f0b90b]" />
      <Market p={panels[2]} />
    </div>
  );
}
